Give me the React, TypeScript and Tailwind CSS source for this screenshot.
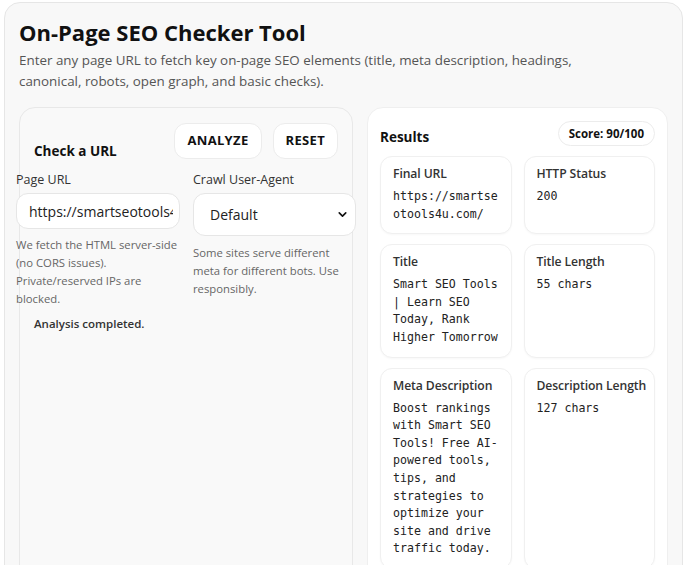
import React from 'react';
import { ChevronDown } from 'lucide-react';

const sans = { fontFamily: '"Open Sans", "Noto Sans", sans-serif' };

interface ResultCardProps {
  label: string;
  value: string;
}

const ResultCard: React.FC<ResultCardProps> = ({ label, value }) => (
  <div className="bg-white rounded-xl border border-[#f0f0f0] shadow-[0_1px_2px_rgba(0,0,0,0.03)] pl-[12px] pr-[8px] pt-[8px] pb-[10px]">
    <div className="text-[12.2px] leading-[18px] font-semibold text-[#333] whitespace-nowrap tracking-[-0.1px]">{label}</div>
    <div className="mt-[5px] font-['DejaVu_Sans_Mono',monospace] text-[11.6px] leading-[17.6px] text-[#222] break-words">
      {value}
    </div>
  </div>
);

const App: React.FC = () => {
  return (
    <div className="w-[686px] h-[565px] overflow-hidden bg-white" style={sans}>
      <div className="ml-[4px] mt-[2px] w-[679px] min-h-[600px] rounded-2xl border border-[#e6e6e6] bg-[#f8f8f8] px-[14px] pt-[15px]">
        <h1 className="text-[22px] leading-[28px] font-bold text-[#111]">On-Page SEO Checker Tool</h1>
        <p className="mt-[4px] max-w-[600px] text-[13.4px] leading-[21px] text-[#555]">
          Enter any page URL to fetch key on-page SEO elements (title, meta description, headings, canonical, robots, open graph, and basic checks).
        </p>

        <div className="mt-[15px] flex gap-[14px] items-start">
          {/* left: form */}
          <div className="w-[334px] min-h-[520px] rounded-2xl border border-[#e8e8e8] bg-[#f9f9f9]">
            <div className="flex items-end justify-between px-[14px] pt-[15px]">
              <h2 className="text-[13.5px] leading-[20px] font-bold text-[#111] mb-[-2px]">Check a URL</h2>
              <div className="flex gap-[11px]">
                <button className="h-[36px] px-[12px] rounded-xl border border-[#ececec] bg-white text-[13px] font-bold tracking-wide text-[#111]">
                  ANALYZE
                </button>
                <button className="h-[36px] px-[12px] rounded-xl border border-[#ececec] bg-white text-[13px] font-bold tracking-wide text-[#111]">
                  RESET
                </button>
              </div>
            </div>

            <div className="-ml-[4px] w-[340px] mt-[12px] grid grid-cols-[164px_163px] gap-x-[13px]">
              <div>
                <label className="block text-[12.5px] leading-[18px] text-[#333]">Page URL</label>
                <input
                  readOnly
                  value="https://smartseotools4u.com/"
                  className="mt-[4px] w-full h-[36px] rounded-xl border border-[#e6e6e6] bg-white pl-[12px] pr-[6px] text-[14px] text-[#222] outline-none"
                />
                <p className="mt-[7px] text-[11.3px] leading-[18px] text-[#666]">
                  We fetch the HTML server-side (no CORS issues). Private/reserved IPs are blocked.
                </p>
              </div>
              <div>
                <label className="block text-[12.5px] leading-[18px] text-[#333]">Crawl User-Agent</label>
                <div className="mt-[4px] h-[43px] rounded-xl border border-[#e6e6e6] bg-white flex items-center justify-between pl-[16px] pr-[6px]">
                  <span className="text-[14px] font-medium text-[#222]">Default</span>
                  <ChevronDown className="w-[13px] h-[13px] text-[#111]" strokeWidth={3} />
                </div>
                <p className="mt-[8px] text-[11.3px] leading-[18px] text-[#666]">
                  Some sites serve different meta for different bots. Use responsibly.
                </p>
              </div>
            </div>

            <div className="px-[14px] mt-[7px] text-[11.5px] leading-[18px] font-semibold text-[#333]">
              Analysis completed.
            </div>
          </div>

          {/* right: results */}
          <div className="w-[302px] min-h-[520px] rounded-2xl border border-[#efefef] bg-white px-[12px] pt-[13px]">
            <div className="flex items-end justify-between">
              <h2 className="text-[13.5px] leading-[20px] font-bold text-[#111] mb-[-1px]">Results</h2>
              <span className="h-[25px] px-[10px] inline-flex items-center rounded-full border border-[#ececec] bg-white text-[11.5px] font-bold text-[#111]">
                Score: 90/100
              </span>
            </div>
            <div className="mt-[10px] grid grid-cols-2 gap-x-[12px] gap-y-[10px]">
              <ResultCard label="Final URL" value="https://smartseotools4u.com/" />
              <ResultCard label="HTTP Status" value="200" />
              <ResultCard label="Title" value="Smart SEO Tools | Learn SEO Today, Rank Higher Tomorrow" />
              <ResultCard label="Title Length" value="55 chars" />
              <ResultCard
                label="Meta Description"
                value="Boost rankings with Smart SEO Tools! Free AI-powered tools, tips, and strategies to optimize your site and drive traffic today."
              />
              <ResultCard label="Description Length" value="127 chars" />
            </div>
          </div>
        </div>
      </div>
    </div>
  );
};

export default App;
